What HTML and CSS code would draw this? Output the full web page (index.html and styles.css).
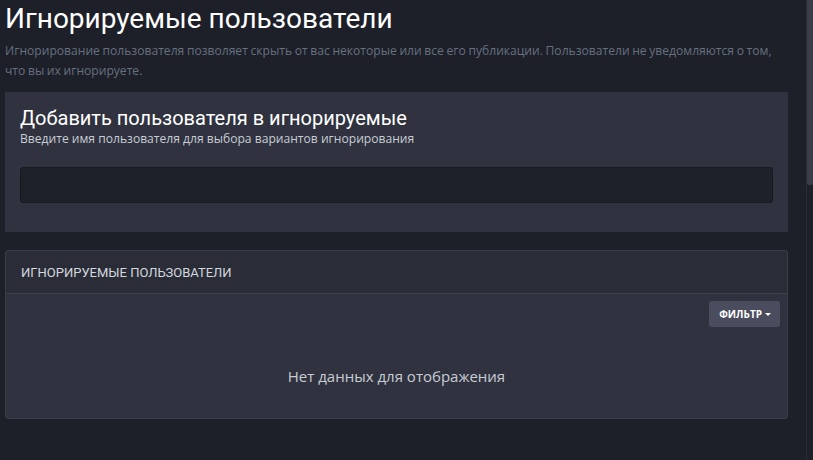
FILE: index.html
```html
<!DOCTYPE html>
<html lang="ru">
<head>
<meta charset="utf-8">
<title>Игнорируемые пользователи</title>
<link rel="stylesheet" href="styles.css">
</head>
<body>
<div class="page">
  <main class="content">
    <h1 class="title">Игнорируемые пользователи</h1>
    <p class="desc">Игнорирование пользователя позволяет скрыть от вас некоторые или все его публикации. Пользователи не уведомляются о том, что вы их игнорируете.</p>

    <section class="add-card">
      <h2 class="add-title">Добавить пользователя в игнорируемые</h2>
      <p class="add-sub">Введите имя пользователя для выбора вариантов игнорирования</p>
      <input class="add-input" type="text">
    </section>

    <section class="list-card">
      <div class="list-head">ИГНОРИРУЕМЫЕ ПОЛЬЗОВАТЕЛИ</div>
      <div class="list-tools">
        <button class="filter-btn">ФИЛЬТР <span class="caret"></span></button>
      </div>
      <div class="empty">Нет данных для отображения</div>
    </section>
  </main>
  <div class="scrollbar"><div class="thumb"></div></div>
</div>
</body>
</html>
```

FILE: styles.css
```css
* { box-sizing: border-box; }
html, body { margin: 0; padding: 0; height: 100%; }
body {
  background: #1d1f29;
  font-family: "Open Sans", "Liberation Sans", sans-serif;
  overflow: hidden;
}
.page {
  display: flex;
  height: 460px;
}
.content {
  flex: 1;
  padding: 0 18px 0 5px;
}
.scrollbar {
  width: 7px;
  border-left: 1px solid #2a2c36;
  background: #1d1f29;
}
.thumb {
  height: 185px;
  background: #3b3e49;
  border-radius: 0 0 2px 2px;
}
.title {
  font-family: Roboto, "Liberation Sans", sans-serif;
  font-weight: 400;
  font-size: 28px;
  line-height: 34px;
  color: #ffffff;
  margin: 2px 0 0;
}
.desc {
  margin: 5px 0 0;
  font-size: 12.1px;
  word-spacing: -0.5px;
  line-height: 20px;
  color: #66717f;
}
.add-card {
  margin-top: 11px;
  background: #30333f;
  padding: 13px 15px 29px;
}
.add-title {
  font-family: Roboto, "Liberation Sans", sans-serif;
  font-weight: 400;
  font-size: 20px;
  line-height: 26px;
  color: #ffffff;
  margin: 0;
}
.add-sub {
  margin: 0;
  font-size: 12.1px;
  line-height: 16px;
  color: #c8ccd6;
}
.add-input {
  display: block;
  width: 100%;
  height: 36px;
  margin-top: 20px;
  background: #1e202a;
  border: 1px solid #181a22;
  border-radius: 3px;
  outline: none;
}
.list-card {
  margin-top: 18px;
  background: #30333f;
  border: 1px solid #3a3d48;
  border-radius: 3px;
  overflow: hidden;
}
.list-head {
  background: #2a2d38;
  height: 43px;
  display: flex;
  align-items: center;
  padding: 0 15px;
  font-family: Roboto, "Liberation Sans", sans-serif;
  font-size: 13px;
  color: #d4d7de;
  border-bottom: 1px solid #3e414c;
}
.list-tools {
  display: flex;
  justify-content: flex-end;
  padding: 7px 7px 0;
}
.filter-btn {
  display: flex;
  align-items: center;
  gap: 3px;
  height: 26px;
  padding: 0 9px 0 10px;
  background: #4a4d5e;
  border: 0;
  border-radius: 3px;
  color: #ffffff;
  font-family: "Open Sans", "Liberation Sans", sans-serif;
  font-weight: 700;
  font-size: 10px;
}
.caret {
  width: 0;
  height: 0;
  border-left: 3px solid transparent;
  border-right: 3px solid transparent;
  border-top: 3px solid #ffffff;
}
.empty {
  text-align: center;
  font-family: "Open Sans", "Liberation Sans", sans-serif;
  font-size: 15px;
  color: #c8ccd4;
  padding: 39px 0 32px;
  line-height: 20px;
}
```
